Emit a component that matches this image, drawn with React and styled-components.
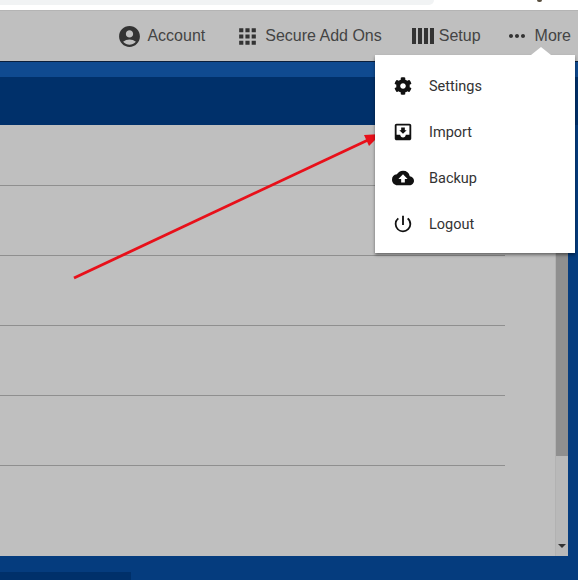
import React from 'react';
import styled, { createGlobalStyle } from 'styled-components';
import {
  MdAccountCircle,
  MdApps,
  MdMoreHoriz,
  MdMoveToInbox,
  MdBackup,
  MdPowerSettingsNew,
} from 'react-icons/md';
import { FaCog } from 'react-icons/fa';

const GlobalStyle = createGlobalStyle`
  html, body {
    margin: 0;
    padding: 0;
    background: #ffffff;
    font-family: "Liberation Sans", Arial, sans-serif;
    overflow: hidden;
  }
`;

const Page = styled.div`
  position: relative;
  width: 578px;
  height: 580px;
  display: flex;
  flex-direction: column;
  overflow: hidden;
  background: #053c7e;
`;

const BrowserStrip = styled.div`
  position: relative;
  height: 10px;
  flex: none;
  background: #ffffff;
`;

const SearchBar = styled.div`
  width: 434px;
  height: 5px;
  background: #f1f3f4;
  border-bottom-right-radius: 8px;
`;

const ExtensionSpeck = styled.div`
  position: absolute;
  left: 537px;
  top: 0;
  width: 5px;
  height: 2px;
  background: #5a5040;
  border-radius: 0 0 3px 3px;
`;

const Header = styled.header`
  height: 51px;
  flex: none;
  display: flex;
  align-items: center;
  justify-content: flex-end;
  padding: 0 7px 0 0;
  box-sizing: border-box;
  background: #bfbfbf;
  border-top: 1px solid #b4b4b4;
  color: #444444;
  font-size: 16px;
`;

const NavItem = styled.div`
  display: flex;
  align-items: center;
  gap: ${(p) => p.$gap}px;
  margin-left: ${(p) => p.$left}px;
`;

const TopBand = styled.div`
  height: 16px;
  flex: none;
  background: #0f4a90;
  border-top: 1px solid #0a1f3c;
  box-sizing: border-box;
`;

const TitleBand = styled.div`
  height: 48px;
  flex: none;
  background: #00306a;
`;

const Panel = styled.div`
  height: 431px;
  flex: none;
  margin-right: 10px;
  display: flex;
  background: #bfbfbf;
`;

const Rows = styled.div`
  width: 505px;
  flex: none;
`;

const Row = styled.div`
  height: ${(p) => p.$height}px;
  box-sizing: border-box;
  border-bottom: 1px solid #8f8f8f;
`;

const Scrollbar = styled.div`
  width: 13px;
  margin-left: auto;
  flex: none;
  display: flex;
  flex-direction: column;
  background: #b9b9b9;
  border-left: 1px solid #b2b2b2;
  box-sizing: border-box;
`;

const ScrollThumb = styled.div`
  height: 331px;
  flex: none;
  background: #8f8f8f;
`;

const ScrollArrow = styled.div`
  margin: auto auto 8px;
  width: 0;
  height: 0;
  border-left: 4px solid transparent;
  border-right: 4px solid transparent;
  border-top: 4px solid #333333;
`;

const Footer = styled.div`
  flex: 1;
  display: flex;
  align-items: flex-end;
  background: #053c7e;
`;

const FooterTab = styled.div`
  width: 131px;
  height: 8px;
  background: #00306a;
`;

const ArrowOverlay = styled.svg`
  position: absolute;
  left: 0;
  top: 0;
  pointer-events: none;
`;

const Menu = styled.div`
  position: absolute;
  left: 375px;
  top: 55px;
  width: 200px;
  height: 198px;
  padding-top: 8px;
  box-sizing: border-box;
  background: #ffffff;
  box-shadow: 0 2px 3px rgba(0, 0, 0, 0.45);

  &::before {
    content: '';
    position: absolute;
    top: -8px;
    left: 156px;
    border-left: 10px solid transparent;
    border-right: 10px solid transparent;
    border-bottom: 8px solid #ffffff;
  }
`;

const MenuItem = styled.div`
  height: 46px;
  display: flex;
  align-items: center;
  color: #333333;
  font-family: Roboto, "Liberation Sans", sans-serif;
  font-size: 14.5px;
`;

const MenuIcon = styled.span`
  width: 53px;
  padding-left: 1px;
  flex: none;
  display: flex;
  justify-content: center;
  color: #111111;
  font-size: ${(p) => p.$size}px;
`;

const SetupIcon = () => (
  <svg width="22" height="16" viewBox="0 0 22 16" fill="#333333">
    <rect x="0" y="0" width="4" height="16" />
    <rect x="6" y="0" width="4" height="16" />
    <rect x="12" y="0" width="4" height="16" />
    <rect x="18" y="0" width="4" height="16" />
  </svg>
);

const App = () => {
  const rowHeights = [61, 70, 70, 70, 70];

  return (
    <Page>
      <GlobalStyle />
      <BrowserStrip>
        <SearchBar />
        <ExtensionSpeck />
      </BrowserStrip>

      <Header>
        <NavItem $gap={5}>
          <MdAccountCircle size={25} color="#333333" />
          Account
        </NavItem>
        <NavItem $gap={5} $left={30}>
          <MdApps size={25} color="#333333" />
          Secure Add Ons
        </NavItem>
        <NavItem $gap={5} $left={30}>
          <SetupIcon />
          Setup
        </NavItem>
        <NavItem $gap={6} $left={24}>
          <MdMoreHoriz size={24} color="#333333" />
          More
        </NavItem>
      </Header>

      <TopBand />
      <TitleBand />

      <Panel>
        <Rows>
          {rowHeights.map((height, index) => (
            <Row key={index} $height={height} />
          ))}
        </Rows>
        <Scrollbar>
          <ScrollThumb />
          <ScrollArrow />
        </Scrollbar>
      </Panel>

      <Footer>
        <FooterTab />
      </Footer>

      <ArrowOverlay width="578" height="580" viewBox="0 0 578 580">
        <line x1="74" y1="278" x2="368" y2="140" stroke="#e8101a" strokeWidth="2.8" />
        <polygon points="381,134 364,135 369,146" fill="#e8101a" />
      </ArrowOverlay>

      <Menu>
        <MenuItem>
          <MenuIcon $size={18}><FaCog /></MenuIcon>
          Settings
        </MenuItem>
        <MenuItem>
          <MenuIcon $size={22}><MdMoveToInbox /></MenuIcon>
          Import
        </MenuItem>
        <MenuItem>
          <MenuIcon $size={22}><MdBackup /></MenuIcon>
          Backup
        </MenuItem>
        <MenuItem>
          <MenuIcon $size={22}><MdPowerSettingsNew /></MenuIcon>
          Logout
        </MenuItem>
      </Menu>
    </Page>
  );
};

export default App;
